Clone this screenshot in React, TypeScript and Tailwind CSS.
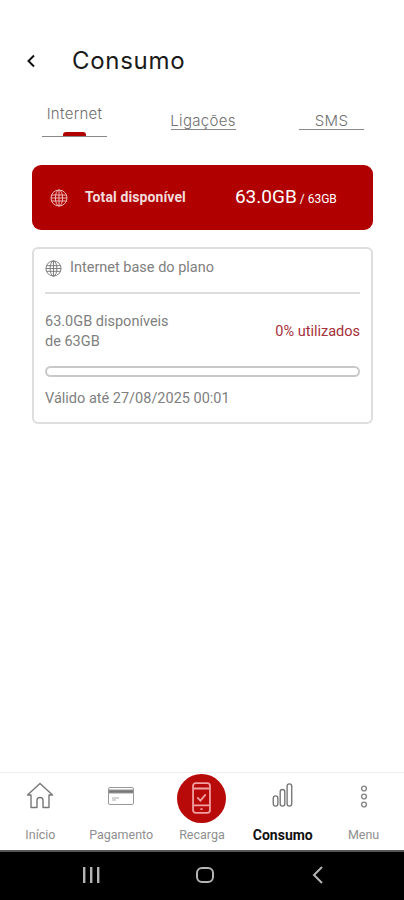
import React from "react";

const sans = "font-['Roboto','Liberation_Sans',sans-serif]";

function Globe({ className, color }: { className?: string; color: string }) {
  return (
    <svg viewBox="0 0 18 18" className={className} fill="none" stroke={color} strokeWidth="1">
      <circle cx="9" cy="9" r="8" />
      <ellipse cx="9" cy="9" rx="3.6" ry="8" />
      <path d="M9 1v16M1.6 6h14.8M1.6 12h14.8M1 9h16" />
    </svg>
  );
}

function Tab({ label, active }: { label: string; active?: boolean }) {
  return (
    <div className={`flex w-[65px] flex-col items-center ${active ? "" : "mt-[7px]"}`}>
      <span className="text-[15px] leading-[18px] font-light tracking-[0.3px] whitespace-nowrap text-[#6f6f6f]">{label}</span>
      <div className={`flex h-[5px] w-full items-end justify-center border-b border-[#888] ${active ? "mt-[9px]" : "mt-[-5px]"}`}>
        {active && <div className="h-[4px] w-[23px] rounded-t-[3px] bg-[#b00000]" />}
      </div>
    </div>
  );
}

function NavItem({ label, children, bold }: { label: string; children: React.ReactNode; bold?: boolean }) {
  return (
    <div className="flex flex-col items-center">
      <div className="flex h-[50px] items-center justify-center">{children}</div>
      <span className={`mt-[5px] leading-[14px] whitespace-nowrap ${bold ? "text-[14px] font-bold text-[#111]" : "text-[12.5px] text-[#8f8f8f]"}`}>{label}</span>
    </div>
  );
}

export default function App() {
  return (
    <div className={`flex h-[900px] w-[404px] flex-col bg-white ${sans}`}>
      <div className="flex-1">
        <div className="flex items-center pl-[26px] pt-[45px]">
          <svg viewBox="0 0 10 14" className="h-[14px] w-[10px]" fill="none" stroke="#111" strokeWidth="2">
            <path d="M8 1.5 2.5 7 8 12.5" />
          </svg>
          <h1 className="ml-[36px] font-['Inter',sans-serif] text-[24px] leading-[32px] font-normal tracking-[0.7px] text-[#1a1a1a]">Consumo</h1>
        </div>

        <div className="mt-[28px] flex items-start justify-between pl-[42px] pr-[40px] font-['Inter',sans-serif]">
          <Tab label="Internet" active />
          <Tab label="Ligações" />
          <Tab label="SMS" />
        </div>

        <div className="ml-[32px] mt-[28px] flex h-[65px] w-[341px] items-center rounded-[9px] bg-[#b00000] pl-[18px] text-white">
          <Globe className="h-[18px] w-[18px]" color="#f0b5b5" />
          <span className="ml-[17px] text-[14px] font-bold tracking-[0.1px] text-[#f3dcdc]">Total disponível</span>
          <span className="ml-[49px] text-[19px]">63.0GB</span>
          <span className="ml-[3px] mt-[2px] text-[12px] whitespace-nowrap">/ 63GB</span>
        </div>

        <div className="ml-[32px] mt-[17px] h-[177px] w-[341px] rounded-[6px] border-2 border-[#dedede] px-[11px] pt-[9px] text-[14.5px] text-[#808080]">
          <div className="flex items-center">
            <Globe className="h-[17px] w-[17px]" color="#777" />
            <span className="ml-[8px] leading-[20px]">Internet base do plano</span>
          </div>
          <div className="mt-[14px] h-[2px] bg-[#dcdcdc]" />
          <div className="mt-[18px] flex items-center justify-between">
            <div className="leading-[20px]">
              <div>63.0GB disponíveis</div>
              <div>de 63GB</div>
            </div>
            <span className="text-[#a5303a]">0% utilizados</span>
          </div>
          <div className="mt-[14px] h-[11px] rounded-full border-2 border-[#c9c9c9]" />
          <div className="mt-[12px] leading-[20px]">Válido até 27/08/2025 00:01</div>
        </div>
      </div>

      <div className="grid h-[78px] grid-cols-5 border-t border-[#eeeeee]">
        <NavItem label="Início">
          <svg viewBox="0 0 28 28" className="mb-[5px] h-[28px] w-[28px]" fill="none" stroke="#777" strokeWidth="1.4" strokeLinejoin="round">
            <path d="M1.5 13 14 1.5 26.5 13h-3.5v12.5h-6v-7a3 3 0 0 0-6 0v7H5V13z" />
          </svg>
        </NavItem>
        <NavItem label="Pagamento">
          <svg viewBox="0 0 26 18" className="mb-[5px] h-[18px] w-[26px]" fill="none" stroke="#999" strokeWidth="1">
            <rect x="0.5" y="0.5" width="25" height="17" rx="1.5" />
            <rect x="0.5" y="3" width="25" height="3" fill="#777" />
            <path d="M4 11h7M4 13h4" stroke="#aaa" />
          </svg>
        </NavItem>
        <NavItem label="Recarga">
          <div className="flex h-[49px] w-[49px] items-center justify-center rounded-full bg-[#b90a0a]">
            <svg viewBox="0 0 18 30" className="h-[32px] w-[19px]" fill="none" stroke="#f0a0a0" strokeWidth="1.7">
              <rect x="1" y="1" width="16" height="28" rx="2.5" />
              <path d="M1 6h16M1 22h16M5 14.5l3 3 5-6M8 25.5h2" />
            </svg>
          </div>
        </NavItem>
        <NavItem label="Consumo" bold>
          <svg viewBox="0 0 22 26" className="mb-[6px] h-[24px] w-[21px]" fill="none" stroke="#777" strokeWidth="1.5">
            <rect x="1" y="14" width="5" height="11" rx="2.4" />
            <rect x="8.5" y="7" width="5" height="18" rx="2.4" />
            <rect x="16" y="1" width="5" height="24" rx="2.4" />
          </svg>
        </NavItem>
        <NavItem label="Menu">
          <svg viewBox="0 0 10 28" className="mb-[3px] h-[27px] w-[8px]" fill="none" stroke="#888" strokeWidth="1.8">
            <circle cx="5" cy="4" r="3" />
            <circle cx="5" cy="14" r="3" />
            <circle cx="5" cy="24" r="3" />
          </svg>
        </NavItem>
      </div>

      <div className="flex h-[50px] items-center border-t-2 border-[#555] bg-black pb-[2px] pl-[83px]">
        <svg viewBox="0 0 17 16" className="h-[16px] w-[17px]" fill="#b5b5b5">
          <rect x="0" y="0" width="2.4" height="16" />
          <rect x="7" y="0" width="2.4" height="16" />
          <rect x="14" y="0" width="2.4" height="16" />
        </svg>
        <div className="ml-[96px] h-[16px] w-[18px] rounded-[6px] border-2 border-[#b5b5b5]" />
        <svg viewBox="0 0 12 18" className="ml-[98px] h-[18px] w-[12px]" fill="none" stroke="#b5b5b5" strokeWidth="2">
          <path d="M10 1 2 9l8 8" />
        </svg>
      </div>
    </div>
  );
}
